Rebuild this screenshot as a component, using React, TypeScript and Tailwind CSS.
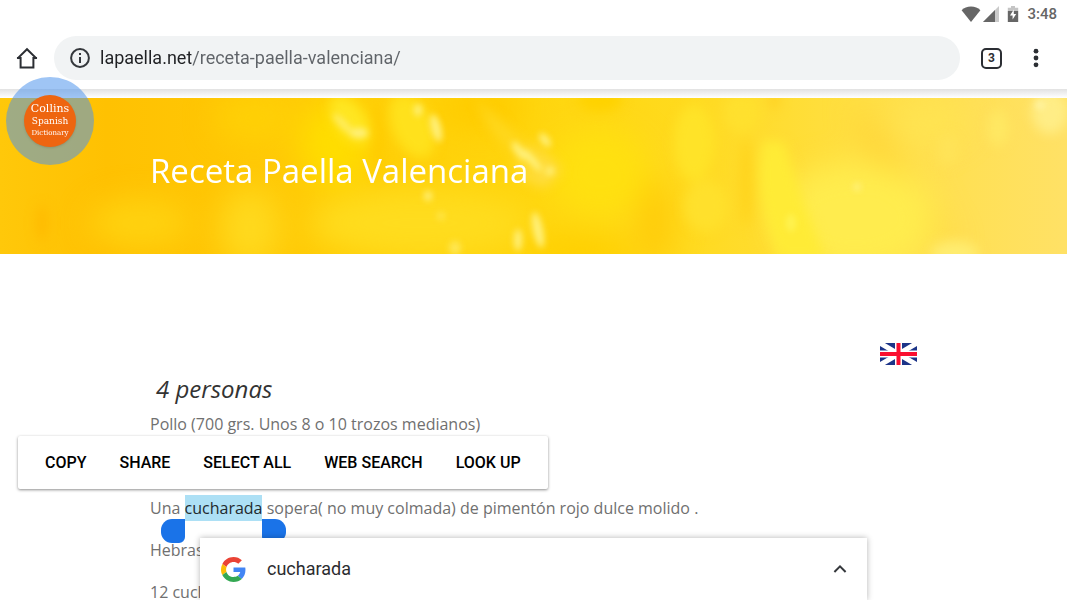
import type { ReactNode } from 'react';

const selectionActions = ['Copy', 'Share', 'Select all', 'Web search', 'Look up'];

const StatusBar = () => {
  return (
    <div className="flex h-7 items-center justify-end pr-2.5 text-[#666]">
      <svg className="mr-0.5 h-4 w-5" viewBox="0 0 20 16" fill="currentColor">
        <path d="M10 16 0.6 4.2C3 1.9 6.2.6 10 .6s7 1.3 9.4 3.6z" />
      </svg>
      <svg className="mr-2 h-4 w-4" viewBox="0 0 16 16" fill="currentColor">
        <path d="M16 0v16H0z" opacity="0.35" />
        <path d="M12 4v12H0z" />
      </svg>
      <svg className="mr-2 h-4 w-3" viewBox="0 0 12 16">
        <path d="M4 0h4v1.8h3.2V5H.8V1.8H4z" fill="#c4c4c4" />
        <path d="M.8 5h10.4v11H.8z" fill="currentColor" />
        <path d="M6.8 3.4 3 9.6h2.6v4L9.2 8H6.8z" fill="#fff" />
      </svg>
      <span className="text-[15px] font-medium">3:48</span>
    </div>
  );
};

const AddressBar = () => {
  return (
    <div className="flex h-[61px] items-center pb-px">
      <button aria-label="Home" className="ml-4 text-[#2b2e33]">
        <svg className="h-[22px] w-[22px]" viewBox="0 0 22 22" fill="none" stroke="currentColor" strokeWidth="2">
          <path d="M1.4 11.6 11 2.2l9.6 9.4M1 11h3.6v9.4h12.8V11H21" />
        </svg>
      </button>
      <div className="ml-4 flex h-11 flex-1 items-center rounded-full bg-[#f1f3f4] pr-6 pl-4">
        <button aria-label="Site information" className="text-[#35383c]">
          <svg className="h-5 w-5" viewBox="0 0 20 20" fill="none" stroke="currentColor" strokeWidth="2">
            <circle cx="10" cy="10" r="8.9" />
            <path d="M10 9v6M10 5v2" />
          </svg>
        </button>
        <input
          type="text"
          aria-label="Address"
          defaultValue="lapaella.net/receta-paella-valenciana/"
          className="ml-2.5 min-w-0 flex-1 bg-[linear-gradient(to_right,#202124_91px,#5f6368_91px)] bg-clip-text text-lg text-transparent outline-none"
        />
      </div>
      <button
        aria-label="Open tabs"
        className="ml-[21px] flex h-[21px] w-[21px] items-center justify-center rounded-[5px] border-2 border-[#2b2e33] text-xs font-bold text-[#2b2e33]"
      >
        3
      </button>
      <button aria-label="More options" className="mr-[21px] ml-6 text-[#2b2e33]">
        <svg className="h-5 w-5" viewBox="0 0 20 20" fill="currentColor">
          <circle cx="10" cy="3.2" r="2.4" />
          <circle cx="10" cy="10" r="2.4" />
          <circle cx="10" cy="16.8" r="2.4" />
        </svg>
      </button>
    </div>
  );
};

const PaellaBackdrop = () => {
  return (
    <svg className="absolute inset-0 h-full w-full" viewBox="0 0 1067 156" preserveAspectRatio="xMidYMid slice">
      <defs>
        <linearGradient id="base" x1="0" x2="1" y1="0" y2="0">
          <stop offset="0" stopColor="#ffc80a" />
          <stop offset="0.1" stopColor="#ffc102" />
          <stop offset="0.2" stopColor="#ffc604" />
          <stop offset="0.35" stopColor="#ffcf08" />
          <stop offset="0.5" stopColor="#ffd60e" />
          <stop offset="0.64" stopColor="#ffda1e" />
          <stop offset="0.8" stopColor="#ffdf42" />
          <stop offset="1" stopColor="#ffe166" />
        </linearGradient>
        <filter id="wide" x="-20%" y="-50%" width="140%" height="200%" colorInterpolationFilters="sRGB">
          <feGaussianBlur stdDeviation="15" />
        </filter>
        <filter id="mid" x="-20%" y="-50%" width="140%" height="200%" colorInterpolationFilters="sRGB">
          <feGaussianBlur stdDeviation="6" />
        </filter>
        <filter id="fine" x="-20%" y="-50%" width="140%" height="200%" colorInterpolationFilters="sRGB">
          <feGaussianBlur stdDeviation="3" />
        </filter>
      </defs>
      <rect width="1067" height="156" fill="url(#base)" />
      <g filter="url(#wide)">
        <ellipse cx="140" cy="125" rx="50" ry="24" fill="#ffd210" />
        <ellipse cx="255" cy="20" rx="40" ry="24" fill="#ffd006" />
        <ellipse cx="250" cy="130" rx="30" ry="40" fill="#ffd91e" />
        <ellipse cx="335" cy="45" rx="35" ry="40" fill="#ffdd00" />
        <ellipse cx="420" cy="125" rx="110" ry="35" fill="#ffdc1e" />
        <ellipse cx="480" cy="10" rx="45" ry="24" fill="#ffcc00" />
        <ellipse cx="600" cy="75" rx="50" ry="45" fill="#ffe010" />
        <ellipse cx="580" cy="155" rx="55" ry="18" fill="#ffcf00" />
        <ellipse cx="655" cy="125" rx="16" ry="45" fill="#ffca08" />
        <path d="M850 0 960 150 925 120 870 50z" fill="#ffcd2c" />
        <ellipse cx="855" cy="120" rx="80" ry="55" fill="#ffec4e" />
        <ellipse cx="930" cy="25" rx="35" ry="20" fill="#ffe452" />
      </g>
      <g filter="url(#mid)">
        <ellipse cx="42" cy="125" rx="5" ry="18" fill="#ffb900" />
        <ellipse cx="350" cy="22" rx="15" ry="28" fill="#ffe622" transform="rotate(-35 350 22)" />
        <ellipse cx="412" cy="28" rx="20" ry="34" fill="#ffe11c" transform="rotate(-25 412 28)" />
        <ellipse cx="378" cy="42" rx="5" ry="38" fill="#ffca00" />
        <ellipse cx="600" cy="2" rx="22" ry="12" fill="#ffd200" />
        <ellipse cx="694" cy="45" rx="20" ry="38" fill="#ffe328" />
        <ellipse cx="706" cy="108" rx="22" ry="26" fill="#ffe02c" />
        <ellipse cx="742" cy="15" rx="18" ry="20" fill="#ffe02e" />
        <path d="M764 42C750 90 770 130 778 160H825L800 95 785 45z" fill="#ffeb36" />
        <ellipse cx="746" cy="85" rx="6" ry="45" fill="#ffd31c" />
        <ellipse cx="774" cy="2" rx="5" ry="10" fill="#ffd022" />
        <ellipse cx="1050" cy="14" rx="18" ry="22" fill="#ffed86" />
        <ellipse cx="998" cy="30" rx="10" ry="18" fill="#ffe863" />
        <ellipse cx="948" cy="52" rx="10" ry="16" fill="#ffe358" />
        <ellipse cx="955" cy="155" rx="24" ry="12" fill="#ffec70" />
        <path d="M512 40 540 50 562 72 545 90 520 80z" fill="#ffdd40" />
        <path d="M475 0 540 60 535 80 490 30z" fill="#ffd820" />
      </g>
      <g filter="url(#fine)" fill="#fff07a">
        <ellipse cx="343" cy="26" rx="4" ry="14" transform="rotate(-45 343 26)" opacity="0.7" />
        <ellipse cx="359" cy="35" rx="9" ry="5" />
        <ellipse cx="418" cy="12" rx="4" ry="6" />
        <ellipse cx="436" cy="30" rx="5" ry="14" transform="rotate(-15 436 30)" />
        <ellipse cx="428" cy="98" rx="4" ry="5" />
        <ellipse cx="441" cy="118" rx="4" ry="4" opacity="0.5" />
        <ellipse cx="532" cy="62" rx="4" ry="14" transform="rotate(-40 532 62)" />
        <ellipse cx="545" cy="42" rx="4" ry="8" transform="rotate(-40 545 42)" />
        <ellipse cx="519" cy="53" rx="4" ry="11" transform="rotate(-35 519 53)" />
        <ellipse cx="550" cy="73" rx="4" ry="4" />
        <ellipse cx="538" cy="132" rx="5" ry="18" transform="rotate(-12 538 132)" />
        <ellipse cx="518" cy="142" rx="4" ry="11" />
        <ellipse cx="455" cy="150" rx="6" ry="7" opacity="0.6" />
        <ellipse cx="791" cy="125" rx="5" ry="9" fill="#fff250" />
        <ellipse cx="857" cy="89" rx="4" ry="4" />
        <ellipse cx="1040" cy="7" rx="5" ry="4" fill="#fff3a4" />
      </g>
    </svg>
  );
};

const DictionaryBubble = () => {
  return (
    <button
      aria-label="Collins Spanish Dictionary"
      className="absolute top-[77px] left-1.5 z-20 flex h-[88px] w-[88px] items-center justify-center rounded-full bg-[#4e94ec]/54"
    >
      <span className="flex h-[52px] w-[52px] flex-col items-center justify-center rounded-full bg-[#ee6510] font-['DejaVu_Serif',serif] whitespace-nowrap text-white shadow-sm">
        <span className="text-[11px] leading-3">Collins</span>
        <span className="text-[9px] leading-3">Spanish</span>
        <span className="text-[7px] leading-3">Dictionary</span>
      </span>
    </button>
  );
};

const UnionJack = () => {
  return (
    <svg className="h-[22px] w-[37px]" viewBox="0 0 37 22">
      <path d="M0 0h37v22H0z" fill="#1c3488" />
      <path d="m0 0 37 22M37 0 0 22" stroke="#fff" strokeWidth="5" />
      <path d="M18.5 0v22M0 11h37" stroke="#fff" strokeWidth="7" />
      <path d="M18.5 0v22M0 11h37" stroke="#fa0f30" strokeWidth="4" />
    </svg>
  );
};

const Selected = ({ children }: { children: ReactNode }) => {
  return (
    <mark className="relative inline-block h-[26px] bg-[#ade0f5] text-[#1f2a2e]">
      {children}
      <span className="absolute top-6 right-full h-6 w-6 rounded-l-[11px] rounded-br-md bg-[#1a73e8]"></span>
      <span className="absolute top-6 left-full h-6 w-6 rounded-r-[11px] rounded-bl-md bg-[#1a73e8]"></span>
    </mark>
  );
};

const Recipe = () => {
  return (
    <main className="mx-auto w-full max-w-[767px] pt-[89px] font-['Open_Sans',sans-serif]">
      <a href="#english" aria-label="English" className="flex justify-end">
        <UnionJack />
      </a>
      <h2 className="pt-1.5 pl-1.5 text-2xl leading-9 text-[#333] italic">4 personas</h2>
      <div className="flex flex-col gap-4 pt-1 text-base leading-[26px] text-[#707070]">
        <p>Pollo (700 grs. Unos 8 o 10 trozos medianos)</p>
        <p className="h-[26px]"></p>
        <p>
          Una <Selected>cucharada</Selected> sopera( no muy colmada) de pimentón rojo dulce molido .
        </p>
        <p>Hebras</p>
        <p>12 cucharadas</p>
      </div>
    </main>
  );
};

const SelectionMenu = () => {
  return (
    <div className="absolute top-[436px] left-[18px] z-10 flex h-[53px] items-center gap-[33px] rounded-xs bg-white px-[27px] text-black shadow-[0_1px_3px_rgba(0,0,0,0.45)]">
      {selectionActions.map((action) => (
        <button key={action} className="text-base font-medium whitespace-nowrap uppercase">
          {action}
        </button>
      ))}
    </div>
  );
};

const GoogleLogo = () => {
  return (
    <svg className="h-[25px] w-[25px]" viewBox="0 0 48 48">
      <path fill="#EA4335" d="M24 9.5c3.54 0 6.71 1.22 9.21 3.6l6.85-6.85C35.9 2.38 30.47 0 24 0 14.62 0 6.51 5.38 2.56 13.22l7.98 6.19C12.43 13.72 17.74 9.5 24 9.5z" />
      <path fill="#4285F4" d="M46.98 24.55c0-1.57-.15-3.09-.38-4.55H24v9.02h12.94c-.58 2.96-2.26 5.48-4.78 7.18l7.73 6c4.51-4.18 7.09-10.36 7.09-17.65z" />
      <path fill="#FBBC05" d="M10.53 28.59c-.48-1.45-.76-2.99-.76-4.59s.27-3.14.76-4.59l-7.98-6.19C.92 16.46 0 20.12 0 24c0 3.88.92 7.54 2.56 10.78l7.97-6.19z" />
      <path fill="#34A853" d="M24 48c6.48 0 11.93-2.13 15.89-5.81l-7.73-6c-2.15 1.45-4.92 2.3-8.16 2.3-6.26 0-11.57-4.22-13.47-9.91l-7.98 6.19C6.51 42.62 14.62 48 24 48z" />
    </svg>
  );
};

const SearchSheet = () => {
  return (
    <div className="absolute inset-x-0 bottom-0 z-10 mx-auto flex h-[62px] w-full max-w-[667px] items-center bg-white pr-5 pl-[21px] shadow-[0_0_6px_rgba(0,0,0,0.3)]">
      <GoogleLogo />
      <span className="ml-[21px] flex-1 text-lg text-[#2b2c2f]">cucharada</span>
      <button aria-label="Expand" className="text-[#35383c]">
        <svg className="h-3.5 w-3.5" viewBox="0 0 14 14" fill="none" stroke="currentColor" strokeWidth="2">
          <path d="m1.4 10 5.6-5.6 5.6 5.6" />
        </svg>
      </button>
    </div>
  );
};

export default function App() {
  return (
    <div className="relative h-screen overflow-hidden bg-white font-['Roboto',sans-serif]">
      <header>
        <StatusBar />
        <AddressBar />
      </header>
      <div className="h-[9px] bg-linear-to-b from-[#e2e2e2] to-white"></div>
      <section className="relative h-[156px] overflow-hidden bg-[#ffd00c]">
        <PaellaBackdrop />
        <div className="relative mx-auto w-full max-w-[767px] pt-12">
          <h1 className="font-['Open_Sans',sans-serif] text-[33px] leading-[50px] text-white">Receta Paella Valenciana</h1>
        </div>
      </section>
      <Recipe />
      <DictionaryBubble />
      <SelectionMenu />
      <SearchSheet />
    </div>
  );
}
